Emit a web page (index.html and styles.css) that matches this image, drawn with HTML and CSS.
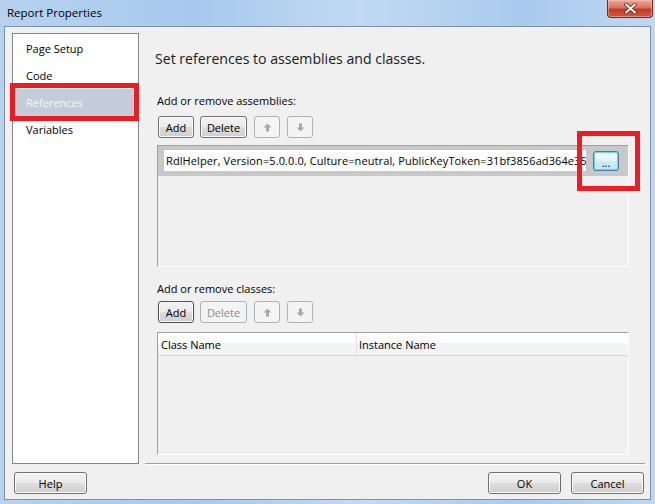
FILE: index.html
```html
<!DOCTYPE html>
<html lang="en">
<head>
  <meta charset="UTF-8" />
  <meta name="viewport" content="width=device-width, initial-scale=1.0" />
  <title>Report Properties</title>
  <link rel="stylesheet" href="styles.css">
</head>
<body>
  <div class="window">
    <div class="titlebar">
      <span class="title">Report Properties</span>
      <div class="close">
        <svg width="13" height="11" viewBox="0 0 13 11">
          <path d="M2 1.5 L11 9.5 M11 1.5 L2 9.5" stroke="#5a2418" stroke-width="3.6" stroke-linecap="round" />
          <path d="M2 1.5 L11 9.5 M11 1.5 L2 9.5" stroke="#ffffff" stroke-width="2" stroke-linecap="round" />
        </svg>
      </div>
    </div>

    <div class="client">
      <div class="main">
        <ul class="nav">
          <li>Page Setup</li>
          <li>Code</li>
          <li class="selected">References</li>
          <li>Variables</li>
        </ul>

        <div class="panel">
          <h1>Set references to assemblies and classes.</h1>

          <div class="label">Add or remove assemblies:</div>
          <div class="toolbar">
            <button class="btn btn-add">Add</button>
            <button class="btn btn-delete">Delete</button>
            <button class="btn btn-arrow" disabled>
              <svg width="9" height="9" viewBox="0 0 9 9"><path d="M4.5 0.5 L8.5 4.5 H6 V8.5 H3 V4.5 H0.5 Z" fill="#a9a9a9" /></svg>
            </button>
            <button class="btn btn-arrow" disabled>
              <svg width="9" height="9" viewBox="0 0 9 9"><path d="M4.5 8.5 L8.5 4.5 H6 V0.5 H3 V4.5 H0.5 Z" fill="#a9a9a9" /></svg>
            </button>
          </div>

          <div class="list assemblies">
            <div class="assembly-row">
              <div class="textbox">RdlHelper, Version=5.0.0.0, Culture=neutral, PublicKeyToken=31bf3856ad364e35</div>
              <button class="btn browse">...</button>
            </div>
          </div>

          <div class="label">Add or remove classes:</div>
          <div class="toolbar">
            <button class="btn btn-add default">Add</button>
            <button class="btn btn-delete" disabled>Delete</button>
            <button class="btn btn-arrow" disabled>
              <svg width="9" height="9" viewBox="0 0 9 9"><path d="M4.5 0.5 L8.5 4.5 H6 V8.5 H3 V4.5 H0.5 Z" fill="#a9a9a9" /></svg>
            </button>
            <button class="btn btn-arrow" disabled>
              <svg width="9" height="9" viewBox="0 0 9 9"><path d="M4.5 8.5 L8.5 4.5 H6 V0.5 H3 V4.5 H0.5 Z" fill="#a9a9a9" /></svg>
            </button>
          </div>

          <div class="list classes">
            <div class="grid-header">
              <div class="col col-class">Class Name</div>
              <div class="col col-instance">Instance Name</div>
            </div>
          </div>
        </div>
      </div>

      <div class="footer">
        <button class="btn btn-footer">Help</button>
        <div class="footer-right">
          <button class="btn btn-footer">OK</button>
          <button class="btn btn-footer">Cancel</button>
        </div>
      </div>

      <!-- red highlight marks drawn over the dialog -->
      <div class="mark mark-nav"></div>
      <div class="mark mark-browse"></div>
    </div>
  </div>
</body>
</html>
```

FILE: styles.css
```css
html, body {
  margin: 0;
  padding: 0;
}

body {
  font-family: 'Segoe UI', 'Open Sans', sans-serif;
  font-size: 11px;
  color: #000;
  background: #b3d0ee;
}

.window {
  width: 655px;
  height: 504px;
  overflow: hidden;
  background: linear-gradient(90deg, #b6d2ef 0%, #a7c9ee 30%, #c2daf3 55%, #a9caee 80%, #bfd8f2 100%);
}

.titlebar {
  display: flex;
  height: 26px;
  padding-left: 7px;
}

.title {
  font-size: 11.5px;
  line-height: 25px;
  color: #000;
}

.close {
  margin-left: auto;
  margin-right: 2px;
  width: 46px;
  height: 18px;
  box-sizing: border-box;
  border: 1px solid #6d2a1e;
  border-top: none;
  border-radius: 0 0 4px 4px;
  background: linear-gradient(180deg, #e9a99b 0%, #d8735f 45%, #c33a22 55%, #cf5a3c 100%);
  box-shadow: inset 0 0 0 1px rgba(255, 200, 190, 0.5);
  display: flex;
  align-items: center;
  justify-content: center;
}

.client {
  position: relative;
  margin: 0 4px;
  height: 474px;
  box-sizing: border-box;
  border: 1px solid #7d90a5;
  background: #f0f0f0;
}

.main {
  display: flex;
  gap: 6px;
  padding: 6px 5px 0 7px;
}

.nav {
  list-style: none;
  margin: 0;
  padding: 1px 0 0 0;
  width: 127px;
  height: 431px;
  box-sizing: border-box;
  border: 1px solid #828790;
  background: #fff;
}

.nav li {
  height: 27px;
  line-height: 27px;
  padding-left: 13px;
  font-size: 11px;
}

.nav li.selected {
  background: #c2cdd9;
  color: #f6f6f6;
}

.panel {
  flex: 1;
  height: 431px;
  box-sizing: border-box;
  padding-left: 12px;
  border-bottom: 1px solid #a0a0a0;
  box-shadow: 0 1px 0 #fff;
}

.panel h1 {
  margin: 16px 0 0 -2px;
  font-size: 14.1px;
  font-weight: normal;
  line-height: 20px;
  color: #1a1a1a;
}

.label {
  line-height: 16px;
  margin-top: 24px;
}

.list.assemblies + .label {
  margin-top: 14px;
}

.toolbar {
  display: flex;
  gap: 7px;
  margin-top: 7px;
}

.list.assemblies + .label + .toolbar {
  margin-top: 4px;
}

.btn {
  font-family: inherit;
  font-size: 11px;
  color: #000;
  height: 22px;
  padding: 0;
  box-sizing: border-box;
  border: 1px solid #707070;
  border-radius: 3px;
  background: linear-gradient(180deg, #f2f2f2 0%, #ebebeb 50%, #dddddd 50%, #cfcfcf 100%);
  box-shadow: inset 0 0 0 1px #fbfbfb;
}

.btn[disabled] {
  color: #8d8d8d;
  border-color: #adb2b5;
  background: #f4f4f4;
  box-shadow: none;
}

.btn-add {
  width: 36px;
  margin-left: 1px;
}

.btn-delete {
  width: 47px;
  margin-left: -1px;
}

.btn-arrow {
  width: 26px;
  margin-left: 0;
  display: flex;
  align-items: center;
  justify-content: center;
}

.btn.default {
  border-color: #505050;
}

.list {
  width: 472px;
  box-sizing: border-box;
  border-top: 1px solid #a0a0a0;
  border-left: 1px solid #a0a0a0;
  border-right: 1px solid #fff;
  border-bottom: 1px solid #fff;
}

.assemblies {
  margin-top: 7px;
  height: 122px;
}

.assembly-row {
  display: flex;
  gap: 7px;
  height: 30px;
  box-sizing: border-box;
  padding: 4px 9px 0 6px;
  background: #c8c8c8;
}

.textbox {
  flex: 1;
  height: 21px;
  line-height: 21px;
  padding-left: 2px;
  letter-spacing: 0.1px;
  background: #fff;
  white-space: nowrap;
  overflow: hidden;
}

.browse {
  width: 26px;
  height: 20px;
  margin-top: 1px;
  padding-top: 3px;
  line-height: 10px;
  border-color: #3c7fb1;
  background: linear-gradient(180deg, #f2fafe 0%, #e3f4fd 50%, #cdebfb 50%, #bfe4f8 100%);
  box-shadow: inset 0 0 0 1px #6fd2f6;
}

.classes {
  margin-top: 9px;
  height: 123px;
}

.grid-header {
  display: flex;
  height: 23px;
  line-height: 23px;
  box-sizing: border-box;
  border-bottom: 1px solid #d5d5d5;
  background: linear-gradient(180deg, #ffffff 0%, #ffffff 45%, #f3f4f6 45%, #f3f4f6 100%);
}

.col-class {
  width: 199px;
  box-sizing: border-box;
  padding-left: 3px;
  border-right: 1px solid #e3e4e6;
}

.col-instance {
  padding-left: 2px;
}

.footer {
  display: flex;
  padding: 8px 6px 0 9px;
}

.footer-right {
  margin-left: auto;
  display: flex;
  gap: 10px;
}

.btn-footer {
  width: 73px;
}

.mark {
  position: absolute;
  box-sizing: border-box;
  border: 5px solid #ed1c24;
}

.mark-nav {
  left: 5px;
  top: 56px;
  width: 129px;
  height: 38px;
}

.mark-browse {
  left: 572px;
  top: 104px;
  width: 63px;
  height: 60px;
}
```
